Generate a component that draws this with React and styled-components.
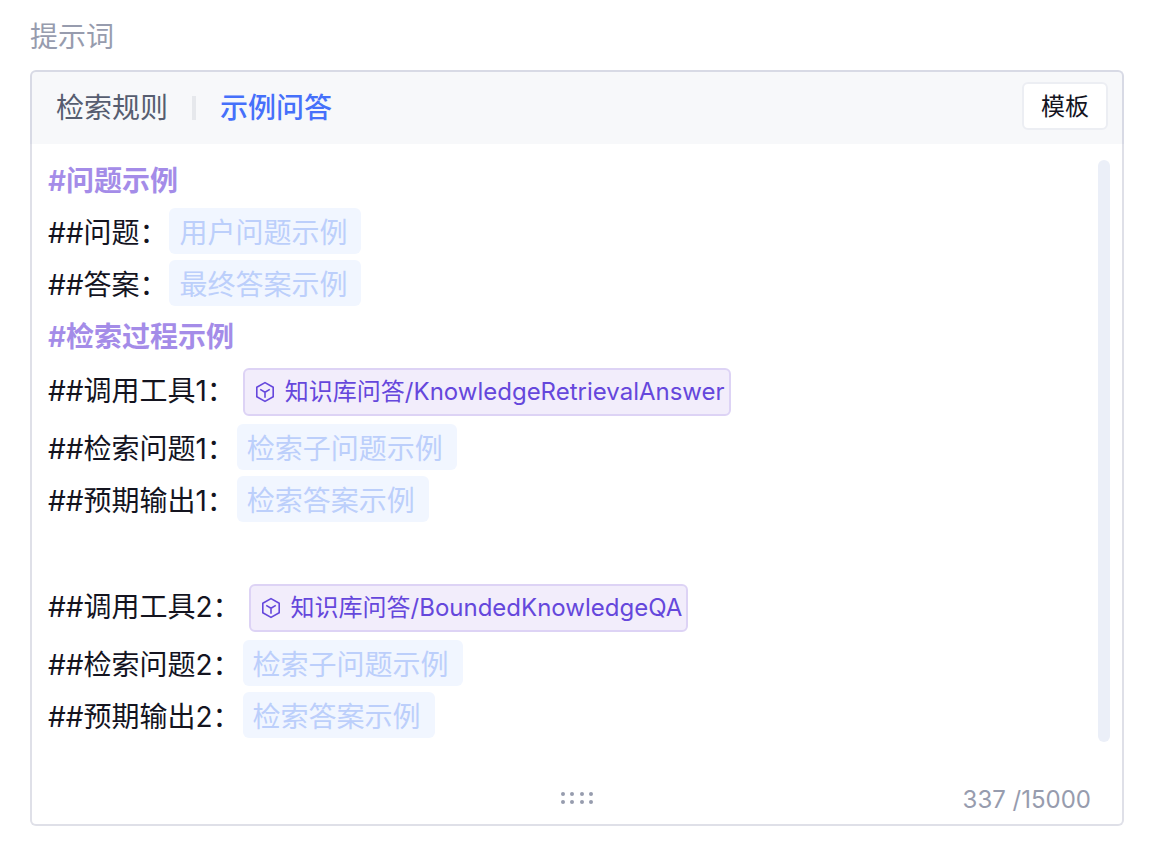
import * as React from 'react';
import { useState } from 'react';
import styled, { createGlobalStyle, css } from 'styled-components';

const GlobalStyle = createGlobalStyle`
    * {
        box-sizing: border-box;
    }

    body {
        margin: 0;
        background-color: #fff;
        color: #14141f;
        font-family: Inter, "Noto Sans CJK SC", sans-serif;
        font-size: 28px;
    }

    button {
        font-family: inherit;
        cursor: pointer;
    }
`;

const Page = styled.main`
    padding: 16px 26px 32px 30px;
`;

const Title = styled.h1`
    margin: 0 0 12px;
    font-size: 28px;
    font-weight: 400;
    line-height: 42px;
    color: #979cae;
`;

const Header = styled.div`
    display: flex;
    align-items: center;
    justify-content: space-between;
    height: 74px;
    padding: 0 14px 4px 24px;
    border: 2px solid #d8dae5;
    border-bottom: none;
    border-radius: 6px 6px 0 0;
    background-color: #f7f8fa;
`;

const Tabs = styled.div`
    display: flex;
    align-items: center;
    gap: 24px;
    padding-top: 4px;
`;

const Tab = styled.button`
    padding: 0;
    border: none;
    background: none;
    font-size: 28px;
    line-height: 42px;
    color: #565d70;
    ${(props) =>
        props.$active &&
        css`
        font-weight: 500;
        color: #4670fa;
    `}
`;

const Separator = styled.span`
    width: 4px;
    height: 24px;
    background-color: #e6e8ec;
`;

const TemplateButton = styled.button`
    height: 48px;
    padding: 0 17px 4px;
    border: 2px solid #eceef3;
    border-radius: 6px;
    background-color: #fff;
    font-size: 24px;
    color: #14141f;
`;

const Body = styled.div`
    border: 2px solid #dfe0e8;
    border-top: none;
    border-radius: 0 0 6px 6px;
`;

const Scroll = styled.div`
    display: flex;
    justify-content: space-between;
    padding: 10px 12px 0 16px;
`;

const Editor = styled.div`
    flex: 1;
    min-width: 0;
    outline: none;
`;

const ScrollThumb = styled.div`
    width: 12px;
    margin-top: 6px;
    border-radius: 6px;
    background-color: #ebeff8;
`;

const Line = styled.div`
    display: flex;
    align-items: flex-start;
    gap: 2px;
    height: ${(props) => (props.$tool ? '60px' : '52px')};
    padding-top: ${(props) => (props.$tool ? '6px' : '2px')};
    line-height: ${(props) => (props.$tool ? '46px' : '50px')};
    white-space: nowrap;
`;

const Heading = styled(Line)`
    font-weight: 600;
    color: #a48ce8;
`;

const Slot = styled.span`
    height: 46px;
    padding: 0 14px 0 10px;
    border-radius: 6px;
    background-color: #f1f6ff;
    color: #bccffb;
`;

const ToolChip = styled.span`
    display: flex;
    align-items: center;
    gap: 10px;
    height: 48px;
    margin-left: 6px;
    padding: 0 4px 0 10px;
    border: 2px solid #ddd3f5;
    border-radius: 6px;
    background-color: #f2edfb;
    font-size: 24px;
    color: #6547dc;
`;

const Footer = styled.div`
    display: grid;
    grid-template-columns: 1fr auto 1fr;
    align-items: center;
    height: 82px;
    padding: 32px 31px 0;
`;

const Counter = styled.span`
    grid-column: 3;
    justify-self: end;
    font-size: 24px;
    color: #979cae;
`;

const Grip = styled.svg`
    grid-column: 2;
    display: block;
`;

function CubeIcon() {
    return (
        <svg width="20" height="22" viewBox="0 0 20 22" fill="none" stroke="currentColor" strokeWidth="1.6" strokeLinejoin="round">
            <path d="M10 1.6 18.2 6.3V15.7L10 20.4 1.8 15.7V6.3Z" />
            <path d="M5.2 8.4 10 11.2 14.8 8.4M10 11.2V16.8" />
        </svg>
    );
}

const tabs = ['检索规则', '示例问答'];

const lines = [
    { heading: '#问题示例' },
    { label: '##问题：', slot: '用户问题示例' },
    { label: '##答案：', slot: '最终答案示例' },
    { heading: '#检索过程示例' },
    { label: '##调用工具1：', tool: '知识库问答/KnowledgeRetrievalAnswer' },
    { label: '##检索问题1：', slot: '检索子问题示例' },
    { label: '##预期输出1：', slot: '检索答案示例' },
    {},
    { label: '##调用工具2：', tool: '知识库问答/BoundedKnowledgeQA' },
    { label: '##检索问题2：', slot: '检索子问题示例' },
    { label: '##预期输出2：', slot: '检索答案示例' },
];

function PromptLine({ heading, label, slot, tool }) {
    if (heading) {
        return <Heading>{heading}</Heading>;
    }
    return (
        <Line $tool={Boolean(tool)}>
            {label && <span>{label}</span>}
            {slot && <Slot>{slot}</Slot>}
            {tool && (
                <ToolChip>
                    <CubeIcon />
                    <span>{tool}</span>
                </ToolChip>
            )}
        </Line>
    );
}

export default function App() {
    const [active, setActive] = useState('示例问答');

    return (
        <Page>
            <GlobalStyle />
            <Title id="prompt-title">提示词</Title>
            <section aria-labelledby="prompt-title">
                <Header>
                    <Tabs role="tablist">
                        {tabs.map((tab, index) => (
                            <React.Fragment key={tab}>
                                {index > 0 && <Separator />}
                                <Tab role="tab" aria-selected={tab === active} $active={tab === active} onClick={() => setActive(tab)}>
                                    {tab}
                                </Tab>
                            </React.Fragment>
                        ))}
                    </Tabs>
                    <TemplateButton>模板</TemplateButton>
                </Header>
                <Body>
                    <Scroll>
                        <Editor role="textbox" aria-multiline="true" aria-labelledby="prompt-title" contentEditable suppressContentEditableWarning spellCheck={false}>
                            {lines.map((line, index) => (
                                <PromptLine key={index} {...line} />
                            ))}
                        </Editor>
                        <ScrollThumb />
                    </Scroll>
                    <Footer>
                        <Grip width="34" height="14" viewBox="0 0 34 14" fill="#979cae">
                            {[3, 12, 22, 31].map((x) => (
                                <React.Fragment key={x}>
                                    <circle cx={x} cy="2" r="2" />
                                    <circle cx={x} cy="10" r="2" />
                                </React.Fragment>
                            ))}
                        </Grip>
                        <Counter>337 /15000</Counter>
                    </Footer>
                </Body>
            </section>
        </Page>
    );
}
